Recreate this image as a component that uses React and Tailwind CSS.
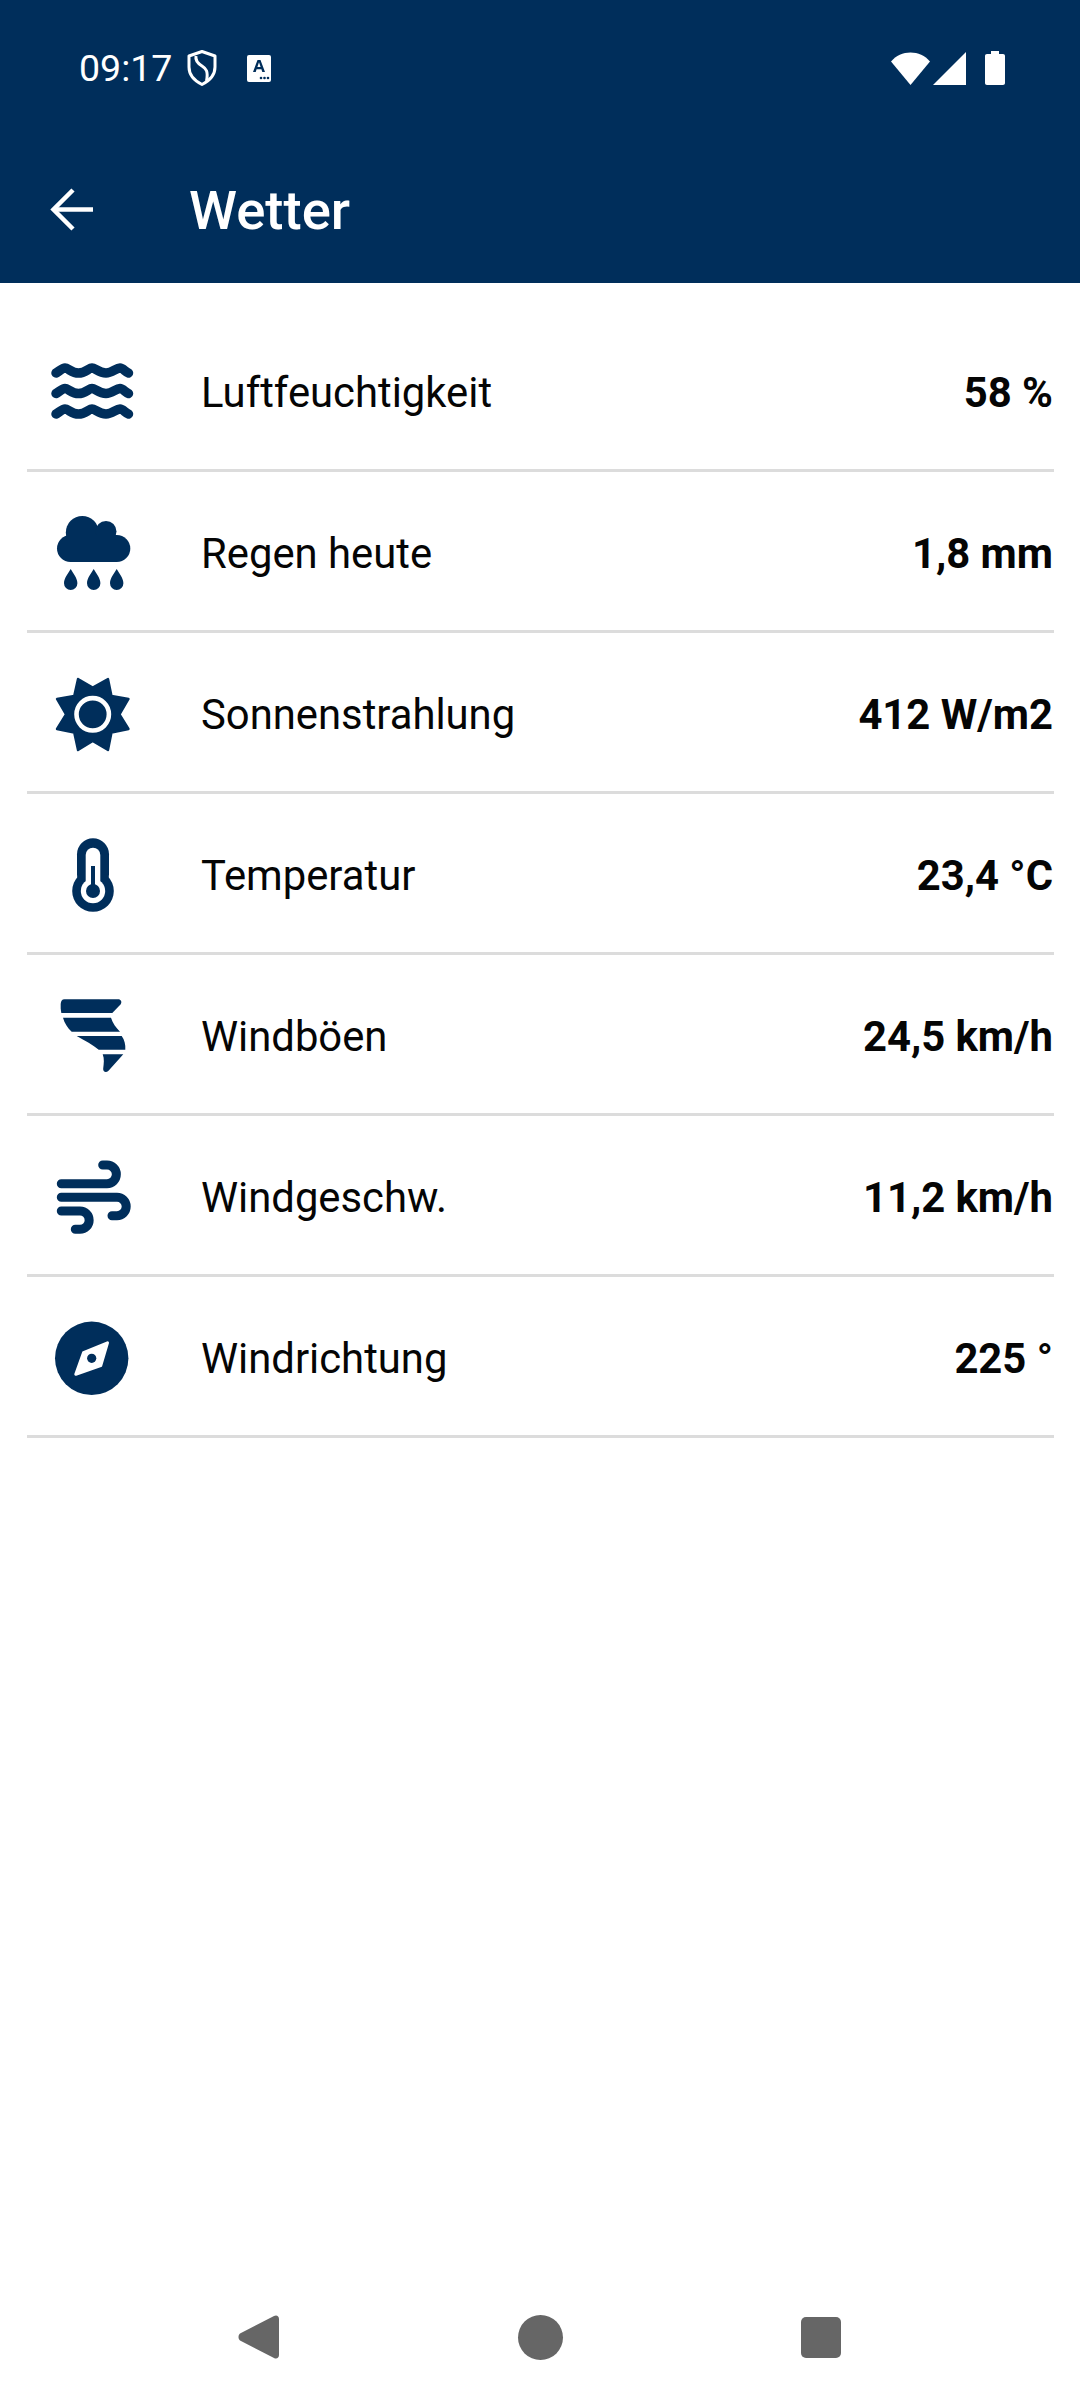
import React from 'react';

const NAVY = '#002e5b';

const WavesIcon = () => (
  <svg viewBox="0 0 88 88" className="w-[88px] h-[88px]" fill="none" stroke={NAVY} strokeWidth="9.500" strokeLinecap="round" strokeLinejoin="round">
    {[0, 20.5, 41].map((dy) => (
      <path
        key={dy}
        transform={`translate(0 ${dy})`}
        d="M8 25C10.500 24 14 20 17 20C20 20 24 25 30.5 25C37 25 41 20 44 20C47 20 51 25 58 25C64 25 68 20 72 20C75 20 77.500 24 80.500 25"
      />
    ))}
  </svg>
);

const RainIcon = () => (
  <svg viewBox="0 0 88 88" className="w-[88px] h-[88px]" fill={NAVY}>
    <circle cx="34.3" cy="23.5" r="16.5" />
    <circle cx="58" cy="22.5" r="10.5" />
    <rect x="9" y="26" width="73.3" height="27" rx="13.5" />
    {[0, 23, 46].map((dx) => (
      <path
        key={dx}
        transform={`translate(${dx} 0)`}
        d="M22.7 60C25 64 29.4 69 29.4 74.3A6.7 6.7 0 0 1 16 74.3C16 69 20.4 64 22.7 60Z"
      />
    ))}
  </svg>
);

const SunIcon = () => (
  <svg viewBox="0 0 88 88" className="w-[88px] h-[88px]">
    <path
      d="M30 9L44.7 17.5L60 9L63.5 26L80.5 29L71.5 44.3L80.5 59L63.5 62.5L60 80L44.7 71L30 80L26.2 62.5L9 59L18 44.3L9 29L26.2 26Z"
      fill={NAVY}
      stroke={NAVY}
      strokeWidth="2.4"
      strokeLinejoin="round"
    />
    <circle cx="44.7" cy="44.3" r="16.2" fill="none" stroke="#fff" strokeWidth="4.6" />
  </svg>
);

const ThermometerIcon = () => (
  <svg viewBox="0 0 88 88" className="w-[88px] h-[88px]">
    <rect x="29" y="7.3" width="32" height="52" rx="16" fill={NAVY} />
    <circle cx="45" cy="60" r="20.8" fill={NAVY} />
    <rect x="37.7" y="16.7" width="14.6" height="40" rx="7.3" fill="#fff" />
    <circle cx="45" cy="60" r="12.2" fill="#fff" />
    <rect x="43" y="35" width="4" height="25" fill={NAVY} />
    <circle cx="45" cy="60" r="7" fill={NAVY} />
  </svg>
);

const TornadoIcon = () => (
  <svg viewBox="0 0 88 88" className="w-[88px] h-[88px]" fill={NAVY}>
    <path d="M16.5 7.3H70C73 7.3 74.300 10 72.500 12.500L64.300 21H13.300C12.700 18 12.500 15 12.700 12C12.900 9 14 7.300 16.500 7.300Z" />
    <path d="M15 25.700H63C64.500 31 68 35.500 72 39.700H23.700C19.500 36 16.500 31 15 25.700Z" />
    <path d="M28.700 44H73.700C76.500 48 77.700 52.500 77.300 57.800H50.700C45 53 37 48.500 28.700 44Z" />
    <path d="M54.700 62.300H75.300L60.500 78.800C58 81 54.800 80 55.200 76.500C55.800 71.500 56.500 67 54.700 62.300Z" />
  </svg>
);

const WindIcon = () => (
  <svg viewBox="0 0 88 88" className="w-[88px] h-[88px]" fill="none" stroke={NAVY} strokeWidth="9" strokeLinecap="round">
    <path d="M13.300 30.700H59A9.350 9.350 0 0 0 59 12H54.700" />
    <path d="M13.300 44.300H69A9.200 9.200 0 0 1 69 62.700H64" />
    <path d="M13.300 58H32A9.150 9.150 0 0 1 32 76.300H27.300" />
  </svg>
);

const CompassIcon = () => (
  <svg viewBox="0 0 88 88" className="w-[88px] h-[88px]">
    <circle cx="43.700" cy="44.300" r="36.700" fill={NAVY} />
    <path d="M59.500 28.800L52.700 51.700L27.800 60.300L35.500 38.700Z" fill="#fff" stroke="#fff" strokeWidth="3" strokeLinejoin="round" />
    <circle cx="43.700" cy="44.300" r="4.600" fill={NAVY} />
  </svg>
);

const rows = [
  { label: 'Luftfeuchtigkeit', value: '58 %', Icon: WavesIcon },
  { label: 'Regen heute', value: '1,8 mm', Icon: RainIcon },
  { label: 'Sonnenstrahlung', value: '412 W/m2', Icon: SunIcon },
  { label: 'Temperatur', value: '23,4 °C', Icon: ThermometerIcon },
  { label: 'Windböen', value: '24,5 km/h', Icon: TornadoIcon },
  { label: 'Windgeschw.', value: '11,2 km/h', Icon: WindIcon },
  { label: 'Windrichtung', value: '225 °', Icon: CompassIcon },
];

const Row = ({ label, value, Icon }) => (
  <div className="ml-[27px] mr-[26px] pr-[1px] pt-[3px] h-[161px] flex items-center border-b-[3px] border-[#dcdcdc] text-[41.800px] text-[#050505]">
    <div className="ml-[21px] w-[153px] shrink-0 flex items-center">
      <Icon />
    </div>
    <span className="flex-1 pt-[3px]">{label}</span>
    <span className="font-bold pt-[3px]">{value}</span>
  </div>
);

const StatusBar = () => (
  <div className="h-[136px] flex items-center pl-[79px] pr-[75px] text-white">
    <span className="text-[37.500px] w-[108px]">09:17</span>
    <svg viewBox="0 0 30 36" className="w-[30px] h-[36px]" fill="none" stroke="#fff" strokeWidth="3" strokeLinejoin="round">
      <path d="M15 1.500L28 6V17C28 25 22 31 15 34.500C8 31 2 25 2 17V6Z" />
      <path d="M9 6C8 11 11 13.500 15 16C19 18.500 21.500 21 19.500 31" />
    </svg>
    <div className="ml-[30px] relative w-[24px] h-[27px] rounded-[2px] bg-white overflow-hidden">
      <svg viewBox="0 0 24 27" className="w-[24px] h-[27px]">
        <path d="M6 17L10.500 5H13.500L18 17H15.300L14.400 14.300H9.600L8.700 17ZM10.400 12H13.600L12 7.300Z" fill={NAVY} />
        <circle cx="14" cy="23" r="1.300" fill={NAVY} />
        <circle cx="17.500" cy="23" r="1.300" fill={NAVY} />
        <circle cx="21" cy="23" r="1.300" fill={NAVY} />
      </svg>
    </div>
    <div className="flex-1" />
    <svg viewBox="0 0 39 33" className="w-[39px] h-[33px]" fill="#fff">
      <path d="M0 9.500C5 3.500 12 0.500 19.500 0.500C27 0.500 34 3.500 39 9.500L19.500 33Z" />
    </svg>
    <svg viewBox="0 0 33 33" className="ml-[3px] w-[33px] h-[33px]" fill="#fff">
      <path d="M33 0V33H0Z" />
    </svg>
    <svg viewBox="0 0 20 34" className="ml-[19px] w-[20px] h-[34px]" fill="#fff">
      <path d="M6 0H14V3H18C19.200 3 20 3.800 20 5V32C20 33.200 19.200 34 18 34H2C0.800 34 0 33.200 0 32V5C0 3.800 0.800 3 2 3H6Z" />
    </svg>
  </div>
);

const Toolbar = () => (
  <div className="h-[147px] flex items-center text-white">
    <svg viewBox="0 0 44 44" className="ml-[50px] w-[44px] h-[44px]" fill="none" stroke="#fff" strokeWidth="4.500">
      <path d="M43 21.500H4" />
      <path d="M23 2L3.500 21.500L23 41" />
    </svg>
    <span className="ml-[95px] pt-[2px] text-[54.500px] font-medium">Wetter</span>
  </div>
);

const NavBar = () => (
  <div className="h-[126px] flex items-center justify-between pl-[238px] pr-[239px]">
    <svg viewBox="0 0 41 44" className="w-[41px] h-[44px]" fill="#666666">
      <path d="M36 1L2 18.500C0 20 0 24 2 25.500L36 43C38.500 44.500 41 43 41 40V4C41 1 38.500 -0.500 36 1Z" />
    </svg>
    <div className="w-[45px] h-[45px] rounded-full bg-[#666666]" />
    <div className="w-[40px] h-[41px] rounded-[5px] bg-[#666666]" />
  </div>
);

export default function App() {
  return (
    <div className="h-[2400px] w-[1080px] flex flex-col bg-white" style={{ fontFamily: 'Roboto, sans-serif' }}>
      <header className="bg-[#002e5b]">
        <StatusBar />
        <Toolbar />
      </header>
      <main className="flex-1 pt-[28px]">
        {rows.map((row) => (
          <Row key={row.label} {...row} />
        ))}
      </main>
      <NavBar />
    </div>
  );
}
